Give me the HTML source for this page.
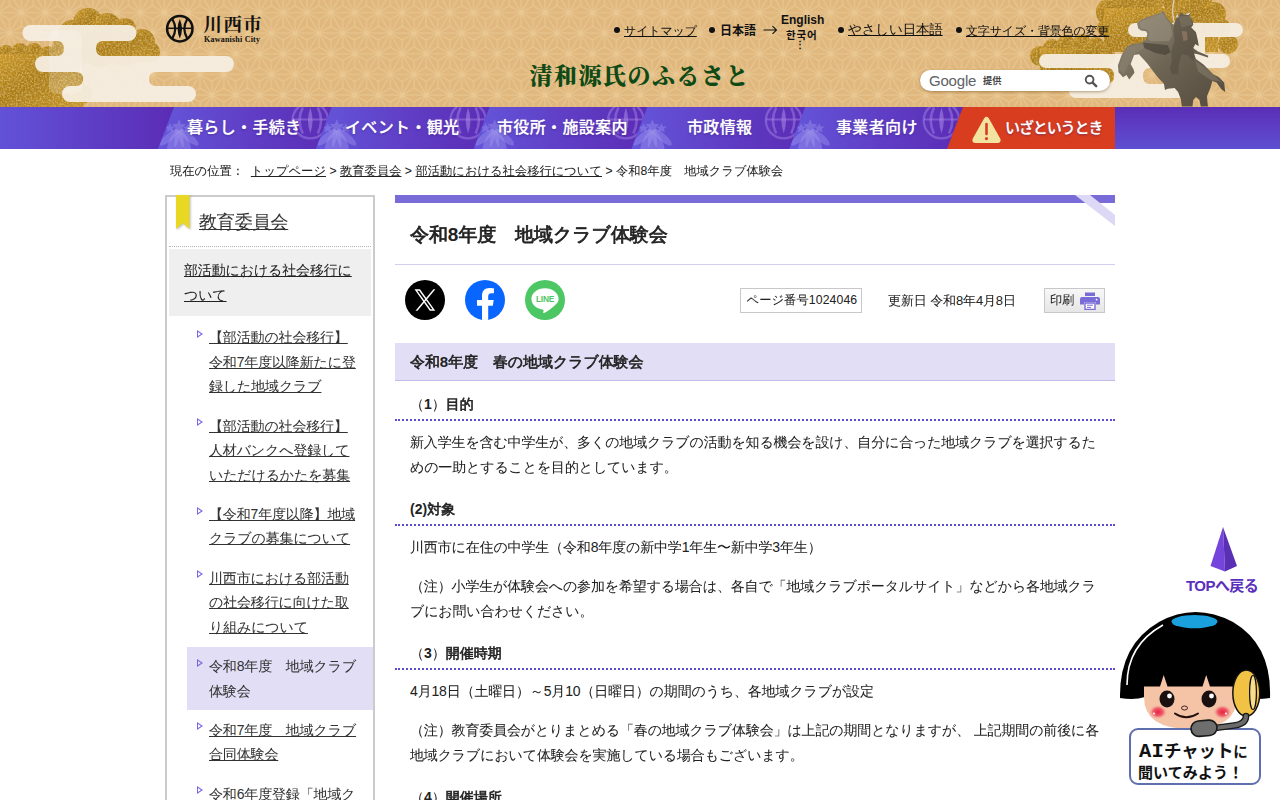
<!DOCTYPE html>
<html lang="ja">
<head>
<meta charset="utf-8">
<title>令和8年度　地域クラブ体験会｜川西市</title>
<style>
*{box-sizing:border-box}
html,body{margin:0;padding:0}
body{width:1280px;height:800px;overflow:hidden;background:#fff;color:#222;
 font-family:"Liberation Sans","WenQuanYi Zen Hei",sans-serif;font-size:14px;line-height:25px;position:relative;letter-spacing:-0.155px;-webkit-text-stroke-width:0.04px}
a{color:#222;text-decoration:underline}
b,strong,.b{font-family:"Liberation Sans","Noto Sans CJK JP",sans-serif;font-weight:bold;letter-spacing:0;-webkit-text-stroke-width:0}
h1,h2,h3{font-family:"Liberation Sans","WenQuanYi Zen Hei",sans-serif;font-weight:normal;-webkit-text-stroke-width:.6px}
h1{-webkit-text-stroke-width:.78px}
h1 b,h2 b,h3 b{font-family:"Liberation Sans",sans-serif}
h3 i{font-style:normal;-webkit-text-stroke-width:.04px}
.abs{position:absolute}
/* header */
#hd{position:absolute;left:0;top:0;width:1280px;height:107px;background:#e0b87e;overflow:hidden}
#hdart{position:absolute;left:0;top:0}
#logo-t{position:absolute;left:203.5px;top:12px;font-family:"Liberation Serif","Noto Serif CJK JP",serif;font-weight:700;font-size:18.5px;line-height:26px;letter-spacing:1.4px;color:#111;white-space:nowrap}
#logo-e{position:absolute;left:204px;top:34.5px;font-family:"Liberation Serif",serif;font-weight:bold;font-size:8px;line-height:10px;letter-spacing:0.22px;color:#111;white-space:nowrap}
.tl{position:absolute;font-size:12px;line-height:14px;white-space:nowrap;color:#111}
.tl a{color:#111}
.dot{position:absolute;width:6px;height:6px;border-radius:50%;background:#111;top:27px}
#catch{position:absolute;left:529.5px;top:59px;font-family:"Liberation Serif","Noto Serif CJK JP",serif;font-weight:900;font-size:23px;line-height:36px;letter-spacing:1.5px;color:#0f4a16;white-space:nowrap}
#search{position:absolute;left:920px;top:70px;width:190px;height:21px;border-radius:11px;background:#fff;box-shadow:0 1px 3px rgba(90,60,10,.45)}
#search .g{position:absolute;left:9px;top:1px;font-size:15px;line-height:19px;color:#5f6368;letter-spacing:-0.2px}
#search .t{position:absolute;left:63px;top:4px;font-size:9.2px;line-height:14px;color:#444}
/* nav */
#nav{position:absolute;left:0;top:107px;width:1280px;height:42px;background:linear-gradient(180deg,#5a2eb6 0%,#5f4fd2 100%);overflow:hidden}
#navart{position:absolute;left:0;top:0}
.nv{position:absolute;top:0;height:42px;line-height:41px;font-size:16px;color:#fff;white-space:nowrap;font-family:"Liberation Sans","Noto Sans CJK JP",sans-serif;font-weight:500;letter-spacing:.35px;text-shadow:0 0 1px rgba(255,255,255,.6),0 1px 2px rgba(40,10,110,.5)}
/* breadcrumb */
#bc{position:absolute;left:170px;top:161px;font-size:12.25px;line-height:20px;white-space:nowrap;color:#222;letter-spacing:.03px}
/* sidebar */
#side{position:absolute;left:165px;top:195px;width:210px;height:620px;border:2px solid #cbcbcb;background:#fff}
#side .ttl{position:absolute;left:32px;top:10.5px;font-size:18px;line-height:28px;white-space:nowrap}
#side .ttl a{color:#333}
#side .sep{position:absolute;left:2px;right:2px;top:49px;border-top:1px dotted #b5b5b5;height:0}
#side .cat{position:absolute;left:2px;top:52px;width:202px;height:67px;background:#efefef;padding:9px 15px 0 15px;line-height:24.5px}
#side ul{position:absolute;left:20px;top:121px;width:186px;margin:0;padding:0;list-style:none;line-height:24.5px}
#side li{position:relative;padding:7.4px 12px 7.4px 22px;color:#333}
#side li a{color:#333}
#side li.cur{background:#e2def5}
#side li:before{content:"";position:absolute;left:10px;top:12px;width:0;height:0;border-left:6px solid #7868dc;border-top:4px solid transparent;border-bottom:4px solid transparent}
#side li:after{content:"";position:absolute;left:11px;top:14px;width:0;height:0;border-left:3px solid #fff;border-top:2px solid transparent;border-bottom:2px solid transparent}
#side li.cur:after{border-left-color:#e2def5}
/* main */
#main{position:absolute;left:395px;top:195px;width:720px}
#bar{position:absolute;left:0;top:0;width:720px;height:8px;background:#7a6cd8}
h1{position:absolute;left:15px;top:20px;margin:0;font-size:19px;line-height:40px;color:#222;white-space:nowrap;letter-spacing:-.1px}
#hl{position:absolute;left:0;top:69px;width:720px;border-top:1px solid #d4cdf2}
.box{position:absolute;font-size:12.25px;line-height:23px;white-space:nowrap;color:#222}
h2{position:absolute;left:0;top:148px;width:720px;height:38px;margin:0;padding:0 15px;font-size:15px;line-height:37px;background:#e2def5;border-bottom:1px solid #c3bbee;color:#222;letter-spacing:-.09px}
#body{position:absolute;left:0;top:186px;width:720px}
h3{margin:0;padding:0 15px 4px;font-size:14px;line-height:21px;border-bottom:2px dotted #5c4cce;color:#222;letter-spacing:0}
#body p{margin:0;padding:0 15px;line-height:25px;color:#222}
/* floating */
#top{position:absolute;left:1186px;top:575px;font-size:15px;line-height:22px;color:#5a30bd;white-space:nowrap;letter-spacing:-0.55px}
#bub{position:absolute;left:1129px;top:728px;width:132px;height:57px;border:2px solid #5f6fae;border-radius:9px;background:#fff}
#bub div{position:absolute;left:8px;font-family:"Liberation Sans","Noto Sans CJK JP",sans-serif;font-weight:700;color:#111;white-space:nowrap}
</style>
</head>
<body>
<div id="hd">
<svg id="hdart" width="1280" height="107" viewBox="0 0 1280 107"><defs><pattern id="asa" width="23.8" height="41.2228" patternUnits="userSpaceOnUse" patternTransform="translate(9.5 -8)"><path d="M-23.8 0L-35.7 20.61M-23.8 0L-11.9 20.61M-23.8 0L0 0M-23.8 13.74L-35.7 20.61M-23.8 13.74L-23.8 0M-23.8 13.74L-11.9 20.61M-23.8 41.22L-35.7 61.83M-23.8 41.22L-11.9 61.83M-23.8 41.22L0 41.22M-23.8 54.96L-35.7 61.83M-23.8 54.96L-23.8 41.22M-23.8 54.96L-11.9 61.83M-11.9 -20.61L-23.8 0M-11.9 -20.61L0 0M-11.9 -20.61L11.9 -20.61M-11.9 -6.87L-23.8 0M-11.9 -6.87L-11.9 -20.61M-11.9 -6.87L0 0M-11.9 6.87L-23.8 0M-11.9 6.87L-11.9 20.61M-11.9 6.87L0 0M-11.9 20.61L-23.8 41.22M-11.9 20.61L0 41.22M-11.9 20.61L11.9 20.61M-11.9 34.35L-23.8 41.22M-11.9 34.35L-11.9 20.61M-11.9 34.35L0 41.22M-11.9 48.09L-23.8 41.22M-11.9 48.09L-11.9 61.83M-11.9 48.09L0 41.22M-11.9 61.83L-23.8 82.45M-11.9 61.83L0 82.45M-11.9 61.83L11.9 61.83M-11.9 75.58L-23.8 82.45M-11.9 75.58L-11.9 61.83M-11.9 75.58L0 82.45M0 -13.74L-11.9 -20.61M0 -13.74L0 0M0 -13.74L11.9 -20.61M0 0L-11.9 20.61M0 0L11.9 20.61M0 0L23.8 0M0 13.74L-11.9 20.61M0 13.74L0 0M0 13.74L11.9 20.61M0 27.48L-11.9 20.61M0 27.48L0 41.22M0 27.48L11.9 20.61M0 41.22L-11.9 61.83M0 41.22L11.9 61.83M0 41.22L23.8 41.22M0 54.96L-11.9 61.83M0 54.96L0 41.22M0 54.96L11.9 61.83M0 68.7L-11.9 61.83M0 68.7L0 82.45M0 68.7L11.9 61.83M11.9 -20.61L0 0M11.9 -20.61L23.8 0M11.9 -20.61L35.7 -20.61M11.9 -6.87L0 0M11.9 -6.87L11.9 -20.61M11.9 -6.87L23.8 0M11.9 6.87L0 0M11.9 6.87L11.9 20.61M11.9 6.87L23.8 0M11.9 20.61L0 41.22M11.9 20.61L23.8 41.22M11.9 20.61L35.7 20.61M11.9 34.35L0 41.22M11.9 34.35L11.9 20.61M11.9 34.35L23.8 41.22M11.9 48.09L0 41.22M11.9 48.09L11.9 61.83M11.9 48.09L23.8 41.22M11.9 61.83L0 82.45M11.9 61.83L23.8 82.45M11.9 61.83L35.7 61.83M11.9 75.58L0 82.45M11.9 75.58L11.9 61.83M11.9 75.58L23.8 82.45M23.8 -13.74L11.9 -20.61M23.8 -13.74L23.8 0M23.8 -13.74L35.7 -20.61M23.8 0L11.9 20.61M23.8 0L35.7 20.61M23.8 0L47.6 0M23.8 13.74L11.9 20.61M23.8 13.74L23.8 0M23.8 13.74L35.7 20.61M23.8 27.48L11.9 20.61M23.8 27.48L23.8 41.22M23.8 27.48L35.7 20.61M23.8 41.22L11.9 61.83M23.8 41.22L35.7 61.83M23.8 41.22L47.6 41.22M23.8 54.96L11.9 61.83M23.8 54.96L23.8 41.22M23.8 54.96L35.7 61.83M23.8 68.7L11.9 61.83M23.8 68.7L23.8 82.45M23.8 68.7L35.7 61.83M35.7 -20.61L23.8 0M35.7 -20.61L47.6 0M35.7 -20.61L59.5 -20.61M35.7 -6.87L23.8 0M35.7 -6.87L35.7 -20.61M35.7 -6.87L47.6 0M35.7 6.87L23.8 0M35.7 6.87L35.7 20.61M35.7 6.87L47.6 0M35.7 20.61L23.8 41.22M35.7 20.61L47.6 41.22M35.7 20.61L59.5 20.61M35.7 34.35L23.8 41.22M35.7 34.35L35.7 20.61M35.7 34.35L47.6 41.22M35.7 48.09L23.8 41.22M35.7 48.09L35.7 61.83M35.7 48.09L47.6 41.22M35.7 61.83L23.8 82.45M35.7 61.83L47.6 82.45M35.7 61.83L59.5 61.83M35.7 75.58L23.8 82.45M35.7 75.58L35.7 61.83M35.7 75.58L47.6 82.45M47.6 -13.74L35.7 -20.61M47.6 -13.74L47.6 0M47.6 -13.74L59.5 -20.61M47.6 0L35.7 20.61M47.6 0L59.5 20.61M47.6 0L71.4 0M47.6 13.74L35.7 20.61M47.6 13.74L47.6 0M47.6 13.74L59.5 20.61M47.6 27.48L35.7 20.61M47.6 27.48L47.6 41.22M47.6 27.48L59.5 20.61M47.6 41.22L35.7 61.83M47.6 41.22L59.5 61.83M47.6 41.22L71.4 41.22M47.6 54.96L35.7 61.83M47.6 54.96L47.6 41.22M47.6 54.96L59.5 61.83M47.6 68.7L35.7 61.83M47.6 68.7L47.6 82.45M47.6 68.7L59.5 61.83M59.5 -20.61L47.6 0M59.5 -20.61L71.4 0M59.5 -20.61L83.3 -20.61M59.5 -6.87L47.6 0M59.5 -6.87L59.5 -20.61M59.5 -6.87L71.4 0M59.5 6.87L47.6 0M59.5 6.87L59.5 20.61M59.5 6.87L71.4 0M59.5 20.61L47.6 41.22M59.5 20.61L71.4 41.22M59.5 20.61L83.3 20.61M59.5 34.35L47.6 41.22M59.5 34.35L59.5 20.61M59.5 34.35L71.4 41.22M59.5 48.09L47.6 41.22M59.5 48.09L59.5 61.83M59.5 48.09L71.4 41.22M59.5 61.83L47.6 82.45M59.5 61.83L71.4 82.45M59.5 61.83L83.3 61.83M59.5 75.58L47.6 82.45M59.5 75.58L59.5 61.83M59.5 75.58L71.4 82.45M71.4 -13.74L59.5 -20.61M71.4 -13.74L71.4 0M71.4 -13.74L83.3 -20.61M71.4 27.48L59.5 20.61M71.4 27.48L71.4 41.22M71.4 27.48L83.3 20.61M71.4 68.7L59.5 61.83M71.4 68.7L71.4 82.45M71.4 68.7L83.3 61.83" stroke="#f3d9aa" stroke-opacity=".46" stroke-width="1" fill="none"/></pattern><linearGradient id="gold" x1="0" y1="0" x2="1" y2="1"><stop offset="0" stop-color="#c99628"/><stop offset=".45" stop-color="#aa7c18"/><stop offset="1" stop-color="#c49228"/></linearGradient><filter id="gn" x="0" y="0" width="100%" height="100%"><feTurbulence type="fractalNoise" baseFrequency=".55" numOctaves="2" seed="3" result="n"/><feColorMatrix in="n" type="matrix" values="0 0 0 0 .98  0 0 0 0 .78  0 0 0 0 .25  .9 0 0 0 -.36" result="m"/><feComposite in="m" in2="SourceGraphic" operator="in" result="t"/><feMerge><feMergeNode in="SourceGraphic"/><feMergeNode in="t"/></feMerge></filter></defs><rect width="1280" height="107" fill="url(#asa)"/><g filter="url(#gn)"><circle cx="88" cy="23" r="15" fill="url(#gold)"/><circle cx="107" cy="27" r="14" fill="url(#gold)"/><circle cx="125" cy="29" r="11" fill="url(#gold)"/><circle cx="72" cy="33" r="13" fill="url(#gold)"/><circle cx="142" cy="42" r="13" fill="url(#gold)"/><circle cx="150" cy="52" r="10" fill="url(#gold)"/><circle cx="62" cy="46" r="10" fill="url(#gold)"/><circle cx="100" cy="45" r="22" fill="url(#gold)"/><circle cx="125" cy="48" r="18" fill="url(#gold)"/><circle cx="78" cy="50" r="16" fill="url(#gold)"/><rect x="62" y="40" width="90" height="22" fill="url(#gold)"/><circle cx="6" cy="54" r="9" fill="url(#gold)"/><circle cx="20" cy="52" r="9" fill="url(#gold)"/><circle cx="34" cy="52" r="9" fill="url(#gold)"/><circle cx="48" cy="55" r="9" fill="url(#gold)"/><circle cx="60" cy="60" r="9" fill="url(#gold)"/><circle cx="70" cy="68" r="10" fill="url(#gold)"/><circle cx="76" cy="80" r="9" fill="url(#gold)"/><circle cx="82" cy="94" r="10" fill="url(#gold)"/><circle cx="74" cy="104" r="10" fill="url(#gold)"/><path d="M0 54H60L74 70L84 94V107H0Z" fill="url(#gold)"/><circle cx="1110" cy="12" r="14" fill="url(#gold)"/><circle cx="1128" cy="4" r="14" fill="url(#gold)"/><circle cx="1150" cy="0" r="14" fill="url(#gold)"/><circle cx="1175" cy="-2" r="14" fill="url(#gold)"/><circle cx="1198" cy="2" r="14" fill="url(#gold)"/><circle cx="1214" cy="14" r="12" fill="url(#gold)"/><circle cx="1222" cy="28" r="9" fill="url(#gold)"/><circle cx="1228" cy="44" r="10" fill="url(#gold)"/><circle cx="1106" cy="28" r="9" fill="url(#gold)"/><path d="M1104 8H1218V52H1104Z" fill="url(#gold)"/><circle cx="1040" cy="56" r="10" fill="url(#gold)"/><circle cx="1052" cy="48" r="9" fill="url(#gold)"/><circle cx="1066" cy="44" r="9" fill="url(#gold)"/><circle cx="1082" cy="43" r="9" fill="url(#gold)"/><circle cx="1096" cy="46" r="9" fill="url(#gold)"/><circle cx="1106" cy="56" r="9" fill="url(#gold)"/><circle cx="1108" cy="74" r="8" fill="url(#gold)"/><path d="M1040 48H1108V82H1040Z" fill="url(#gold)"/></g><g fill="#f6efe3" fill-opacity=".93"><rect x="22.5" y="25" width="114" height="16" rx="8"/><rect x="35" y="56" width="199" height="16" rx="8"/><rect x="62" y="86" width="134" height="16" rx="8"/><path d="M57 41H103Q96 41 96 48.5Q96 56 103 56H57Q64 56 64 48.5Q64 41 57 41Z"/><path d="M76 72H156Q149 72 149 79Q149 86 156 86H76Q83 86 83 79Q83 72 76 72Z"/><rect x="1128" y="23" width="115" height="14" rx="7"/><rect x="1039" y="54" width="191" height="14" rx="7"/><rect x="1069" y="84" width="117" height="14" rx="7"/><path d="M1107 68H1150Q1143 68 1143 76Q1143 84 1150 84H1107Q1114 84 1114 76Q1114 68 1107 68Z"/><rect x="1165" y="37" width="40" height="17"/></g><rect x="49" y="30" width="33" height="64" rx="8" fill="#fff" fill-opacity=".2"/><linearGradient id="brz" x1="0" y1="0" x2="1" y2="1"><stop offset="0" stop-color="#968c7a"/><stop offset=".5" stop-color="#6e6454"/><stop offset="1" stop-color="#524a3d"/></linearGradient><g transform="translate(1110 0) scale(.1375)"><path d="M466 0Q448 70 462 140Q478 215 525 290" stroke="#ded8c8" stroke-width="9" fill="none"/><path d="M197 170L215 150L260 130L330 105L375 90L388 78L398 95L410 125L440 160L462 180L468 170L480 140L495 120L510 100L520 92L540 110L565 98L588 92L575 120L600 150L605 180L590 200L625 235L640 300L645 335L620 320L605 350L640 375L715 405L712 418L640 395L610 390L625 430L680 470L720 510L750 540L790 560L830 600L838 670L810 650L775 600L745 590L730 640L705 700L712 775L660 775L650 725L625 705L605 730L600 775L522 775L515 720L495 670L470 640L420 645L400 655L392 610L350 565L300 500L270 460L210 395L175 400L150 465L172 505L178 530L140 578L120 545L95 562L62 525L58 475L85 400L122 340L160 320L225 312L262 285L272 245L262 228L225 222L205 205Z" fill="url(#brz)"/><path d="M468 175L480 140L510 100L520 92L540 110L588 92L575 120L600 150L605 180L590 200L625 235L645 335L620 320L605 350L620 420L600 440L560 400L520 395L500 470L495 540L450 540L435 500L450 440L445 380L455 340L470 300L462 230Z" fill="#4e463a" fill-opacity=".45"/><path d="M215 160L330 112L385 95L405 135L440 175L455 250L430 300L300 300L275 285L285 240L268 215L220 205Z" fill="#9a917f" fill-opacity=".55"/><path d="M240 310L420 330L440 380L400 400L330 385L250 350Z" fill="#3d372d" fill-opacity=".55"/><path d="M130 340L230 320L250 350L200 380L170 395L140 460L100 540L70 510L75 460L100 400Z" fill="#8d8472" fill-opacity=".5"/><path d="M620 440L700 500L760 550L825 610L790 590L740 585L700 560L640 520Z" fill="#8d8472" fill-opacity=".45"/><path d="M500 120L585 115L598 180L520 200Z" fill="#7d7464" fill-opacity=".6"/><path d="M545 105L588 90L572 110Z" fill="#e8e2d2"/><path d="M478 128L490 100L500 125Z" fill="#d8d2c2"/><path d="M520 225L560 230L565 290L535 300Z" fill="#a08068" fill-opacity=".6"/></g><g transform="translate(179.8 28.7)"><circle r="12.7" fill="none" stroke="#111" stroke-width="2.5"/><path d="M-12.6 -.4H12.6" stroke="#111" stroke-width="1.5"/><path d="M0 -9.8Q4.4 0 0 9.8Q-4.4 0 0 -9.8Z" fill="#111"/><path d="M-7.6 -10Q-1.6 0 -7.6 10" fill="none" stroke="#111" stroke-width="2.2"/><path d="M7.6 -10Q1.6 0 7.6 10" fill="none" stroke="#111" stroke-width="2.2"/></g></svg>
<div id="logo-t">川西市</div>
<div id="logo-e">Kawanishi City</div>
<span class="dot" style="left:614px"></span><div class="tl" style="left:624px;top:24px"><a>サイトマップ</a></div>
<span class="dot" style="left:709px"></span><div class="tl b" style="left:720px;top:24px">日本語</div>
<svg class="abs" style="left:763px;top:24px" width="15" height="12" viewBox="0 0 15 12"><path d="M0.5 6H13.5M9.5 2.2L13.5 6L9.5 9.8" fill="none" stroke="#111" stroke-width="1.1"/></svg>
<div class="tl b" style="left:781px;top:13px;font-size:12px">English</div>
<div class="tl" style="left:786px;top:28px;font-size:10.5px;letter-spacing:.9px;font-family:'Liberation Sans','Noto Sans CJK KR',sans-serif;font-weight:bold">한국어</div>
<div class="tl b" style="left:795px;top:40px;font-size:10px;line-height:10px">⋮</div>
<span class="dot" style="left:838px"></span><div class="tl" style="left:848px;top:23px;font-size:13.5px"><a>やさしい日本語</a></div>
<span class="dot" style="left:956px"></span><div class="tl" style="left:966px;top:24px"><a>文字サイズ・背景色の変更</a></div>
<div id="catch">清和源氏のふるさと</div>
<div id="search"><span class="g">Google</span><span class="t b">提供</span>
<svg class="abs" style="left:164px;top:4px" width="14" height="14" viewBox="0 0 14 14"><circle cx="5.6" cy="5.6" r="3.9" fill="none" stroke="#555" stroke-width="1.9"/><path d="M8.6 8.6L12.2 12.2" stroke="#555" stroke-width="2.4" stroke-linecap="round"/></svg>
</div>
</div>

<div id="nav">
<svg id="navart" width="1280" height="42" viewBox="0 0 1280 42"><defs><linearGradient id="ng" x1="0" y1="0" x2="1" y2="0"><stop offset="0" stop-color="#6456da"/><stop offset=".55" stop-color="#5f3dc4"/><stop offset="1" stop-color="#5b2cb5"/></linearGradient><linearGradient id="nl" x1="0" y1="0" x2="1" y2="0"><stop offset="0" stop-color="#6252d8"/><stop offset="1" stop-color="#5b2cb5"/></linearGradient><g id="crest" fill="none" stroke="#a98be6" stroke-opacity=".45"><circle r="17.8" stroke-width="2.3"/><path d="M-17.8 -1H17.8" stroke-width="1.8"/><path d="M0 -13Q4.6 0 0 13Q-4.6 0 0 -13Z" fill="#a98be6" fill-opacity=".55" stroke="none"/><path d="M-7.5 -13Q-14 0 -7.5 13" stroke-width="2.6"/><path d="M7.5 -13Q14 0 7.5 13" stroke-width="2.6"/></g><g id="sasa" fill="#a9a0f0" fill-opacity=".36"><ellipse cx="0" cy="14" rx="4.6" ry="13"/><ellipse cx="0" cy="14" rx="4.2" ry="13" transform="rotate(24)"/><ellipse cx="0" cy="14" rx="4.2" ry="13" transform="rotate(-24)"/><ellipse cx="0" cy="13" rx="3.8" ry="12" transform="rotate(50)"/><ellipse cx="0" cy="13" rx="3.8" ry="12" transform="rotate(-50)"/><path d="M0 -10L2 -5L7 -5L3.5 -1.5L5 3L0 0.5L-5 3L-3.5 -1.5L-7 -5L-2 -5Z"/><path d="M9 -6L10.5 -2.5L14.5 -2.5L11.5 0L12.5 3.5L9 1.5L5.5 3.5L6.5 0L3.5 -2.5L7.5 -2.5Z"/><path d="M-9 -6L-7.5 -2.5L-3.5 -2.5L-6.5 0L-5.5 3.5L-9 1.5L-12.5 3.5L-11.5 0L-14.5 -2.5L-10.5 -2.5Z"/></g></defs><path d="M0 0H174 L158 42H0Z" fill="url(#nl)"/><g transform="translate(158 0)"><path d="M16 0H174.3 L158.3 42H0Z" fill="url(#ng)"/><clipPath id="c0"><path d="M16 0H173.8 L157.8 42H0Z"/></clipPath><g clip-path="url(#c0)"><use href="#crest" x="152.3" y="13.5"/><use href="#sasa" x="21" y="22"/></g></g><g transform="translate(315.8 0)"><path d="M16 0H174.3 L158.3 42H0Z" fill="url(#ng)"/><clipPath id="c1"><path d="M16 0H173.8 L157.8 42H0Z"/></clipPath><g clip-path="url(#c1)"><use href="#crest" x="152.3" y="13.5"/><use href="#sasa" x="21" y="22"/></g></g><g transform="translate(473.6 0)"><path d="M16 0H174.3 L158.3 42H0Z" fill="url(#ng)"/><clipPath id="c2"><path d="M16 0H173.8 L157.8 42H0Z"/></clipPath><g clip-path="url(#c2)"><use href="#crest" x="152.3" y="13.5"/><use href="#sasa" x="21" y="22"/></g></g><g transform="translate(631.4 0)"><path d="M16 0H174.3 L158.3 42H0Z" fill="url(#ng)"/><clipPath id="c3"><path d="M16 0H173.8 L157.8 42H0Z"/></clipPath><g clip-path="url(#c3)"><use href="#crest" x="152.3" y="13.5"/><use href="#sasa" x="21" y="22"/></g></g><g transform="translate(789.2 0)"><path d="M16 0H174.3 L158.3 42H0Z" fill="url(#ng)"/><clipPath id="c4"><path d="M16 0H173.8 L157.8 42H0Z"/></clipPath><g clip-path="url(#c4)"><use href="#crest" x="152.3" y="13.5"/><use href="#sasa" x="21" y="22"/></g></g><path d="M963 0H1115V42H947Z" fill="#d83d1f"/><path d="M987.5 12L999 32.5Q999.6 34.5 997.5 34.5H975.5Q973.4 34.5 974 32.5L985.5 12Q986.5 10.6 987.5 12Z" fill="#f3e3a0" stroke="#f3e3a0" stroke-width="3" stroke-linejoin="round"/><path d="M986.5 17V27" stroke="#d83d1f" stroke-width="2.6" stroke-linecap="round"/><circle cx="986.5" cy="31.6" r="1.6" fill="#d83d1f"/></svg>
<div class="nv" style="left:187px">暮らし・手続き</div>
<div class="nv" style="left:345px">イベント・観光</div>
<div class="nv" style="left:497px">市役所・施設案内</div>
<div class="nv" style="left:687px">市政情報</div>
<div class="nv" style="left:836px">事業者向け</div>
<div class="nv" style="left:1005px;font-size:15px;letter-spacing:-1.1px">いざというとき</div>
</div>

<div id="bc">現在の位置：&nbsp; <a>トップページ</a> &gt; <a>教育委員会</a> &gt; <a>部活動における社会移行について</a> &gt; 令和8年度　地域クラブ体験会</div>

<div id="side">
<svg class="abs" style="left:9px;top:-2px;filter:drop-shadow(1px 1px 1px rgba(0,0,0,.28))" width="16" height="38" viewBox="0 0 16 38"><path d="M0 0H13.5V34L6.75 28L0 34Z" fill="#e8d823"/></svg>
<div class="ttl"><a>教育委員会</a></div>
<div class="sep"></div>
<div class="cat"><a>部活動における社会移行について</a></div>
<ul>
<li><a>【部活動の社会移行】令和7年度以降新たに登録した地域クラブ</a></li>
<li><a>【部活動の社会移行】人材バンクへ登録していただけるかたを募集</a></li>
<li><a>【令和7年度以降】地域クラブの募集について</a></li>
<li><a>川西市における部活動の社会移行に向けた取り組みについて</a></li>
<li class="cur">令和8年度　地域クラブ体験会</li>
<li><a>令和7年度　地域クラブ合同体験会</a></li>
<li><a>令和6年度登録「地域クラブ」について</a></li>
</ul>
</div>

<div id="main">
<div id="bar"></div>
<svg class="abs" style="left:675px;top:0" width="45" height="36" viewBox="0 0 45 36"><path d="M5 0H20L45 20V31Z" fill="#ddd8f5"/></svg>
<h1>令和<b>8</b>年度　地域クラブ体験会</h1>
<div id="hl"></div>
<svg class="abs" style="left:10px;top:85px" width="160" height="40" viewBox="0 0 160 40"><circle cx="20" cy="20" r="20" fill="#000"/><g transform="translate(20 20) scale(1.14) translate(-20.2 -20)"><path d="M11 10.5H15.8L29.2 29.5H24.4ZM13.4 11.8L25.1 28.2H26.8L15.1 11.8Z" fill="#fff" fill-rule="evenodd"/><path d="M27.6 10.5L11.9 29.5H13.6L29.3 10.5Z" fill="#fff"/></g><circle cx="80" cy="20" r="20" fill="#0866ff"/><path d="M87.8 25.8L88.7 20H83.2V16.3C83.2 14.7 84 13.2 86.4 13.2H88.9V8.3C88.9 8.3 86.7 7.9 84.5 7.9C80 7.9 77 10.6 77 15.6V20H72V25.8H77V39.8A20 20 0 0 0 83.2 39.8V25.8Z" fill="#fff"/><circle cx="140" cy="20" r="20" fill="#4cc764"/><path d="M140 8.2C132.4 8.2 126.4 13 126.4 18.9C126.4 24.2 131.2 28.6 137.6 29.4C138.7 29.6 138.6 30.2 138.4 31.6C138.3 32.4 137.9 33.6 139.3 33C140.8 32.4 147.2 28.4 150.1 25.1C152.1 23 153.6 21.2 153.6 18.9C153.6 13 147.6 8.2 140 8.2Z" fill="#fff"/><text x="140" y="22" font-family="Liberation Sans,sans-serif" font-weight="bold" font-size="8.4" fill="#4cc764" text-anchor="middle" letter-spacing="-.3">LINE</text></svg>
<div class="box" style="left:345px;top:93px;width:122px;height:25px;border:1px solid #c8c8c8;background:#fff;padding-left:5.5px;letter-spacing:.1px">ページ番号1024046</div>
<div class="box" style="left:493px;top:94px;font-size:13px;letter-spacing:-.12px">更新日 令和8年4月8日</div>
<div class="box" style="left:649px;top:93px;width:61px;height:25px;border:1px solid #c8c8c8;background:linear-gradient(#f7f7f7,#e6e6e6);padding-left:5px">印刷<svg class="abs" style="left:35px;top:3px" width="20" height="18" viewBox="0 0 20 18"><path d="M5 0.5H15V4H5Z" fill="#7a6cd8"/><path d="M2 5H18Q20 5 20 7V12.5H16V10H4V12.5H0V7Q0 5 2 5Z" fill="#7a6cd8"/><path d="M5 11H15V17.5H5Z" fill="#fff" stroke="#7a6cd8" stroke-width="1.4"/><path d="M7 13.2H13M7 15.4H11" stroke="#7a6cd8" stroke-width="1"/><circle cx="16.6" cy="7.6" r=".9" fill="#fff"/></svg></div>
<h2>令和<b>8</b>年度　春の地域クラブ体験会</h2>
<div id="body">
<h3 style="margin-top:13px"><i>（</i><b>1</b><i>）</i>目的</h3>
<p style="margin-top:9px">新入学生を含む中学生が、多くの地域クラブの活動を知る機会を設け、自分に合った地域クラブを選択するための一助とすることを目的としています。</p>
<h3 style="margin-top:19px"><b>(2)</b>対象</h3>
<p style="margin-top:9px">川西市に在住の中学生（令和8年度の新中学1年生〜新中学3年生）</p>
<p style="margin-top:14px">（注）小学生が体験会への参加を希望する場合は、各自で「地域クラブポータルサイト」などから各地域クラブにお問い合わせください。</p>
<h3 style="margin-top:19px"><i>（</i><b>3</b><i>）</i>開催時期</h3>
<p style="margin-top:9px">4月18日（土曜日）～5月10（日曜日）の期間のうち、各地域クラブが設定</p>
<p style="margin-top:14px">（注）教育委員会がとりまとめる「春の地域クラブ体験会」は上記の期間となりますが、 上記期間の前後に各地域クラブにおいて体験会を実施している場合もございます。</p>
<h3 style="margin-top:19px"><i>（</i><b>4</b><i>）</i>開催場所</h3>
<p style="margin-top:9px">各地域クラブが定める活動場所</p>
</div>
</div>

<svg class="abs" style="left:1205px;top:524px" width="36" height="52" viewBox="0 0 36 52"><path d="M18 3L5.5 42L20 47.6Z" fill="#7444dc"/><path d="M18 3L32 42L20 47.6Z" fill="#5a2fb3"/></svg>
<div id="top" class="b">TOPへ戻る</div>
<svg id="chara" class="abs" style="left:1115px;top:605px" width="165" height="135" viewBox="0 0 165 135"><defs><radialGradient id="chk"><stop offset="0" stop-color="#e8203c"/><stop offset=".55" stop-color="#ee4a60" stop-opacity=".85"/><stop offset="1" stop-color="#f6a0a0" stop-opacity="0"/></radialGradient></defs><path d="M5 93Q4 40 44 17Q80 -3 118 17Q157 40 155 93Q130 97 120 86L40 86Q28 97 5 93Z" fill="#000"/><path d="M29 68H122V92Q122 124 75.5 124Q29 124 29 92Z" fill="#f5c3a5"/><path d="M20 60H135V81.5H95L91.2 70L87.5 81.5H52.5L48.7 70L45 81.5H20Z" fill="#000"/><ellipse cx="79.5" cy="16.6" rx="23" ry="6.6" fill="#1aa0dc"/><path d="M12 80Q12 40 48 20" stroke="#fff" stroke-width="1.6" fill="none"/><ellipse cx="52" cy="94" rx="7.5" ry="8.5" fill="#1a1010"/><ellipse cx="94" cy="94" rx="7.5" ry="8.5" fill="#1a1010"/><circle cx="54.5" cy="91" r="2.4" fill="#fff"/><circle cx="96.5" cy="91" r="2.4" fill="#fff"/><ellipse cx="43" cy="107" rx="9" ry="7" fill="url(#chk)"/><ellipse cx="107.5" cy="107" rx="9" ry="7" fill="url(#chk)"/><circle cx="39" cy="108.5" r="1" fill="#fff"/><circle cx="111" cy="108.5" r="1" fill="#fff"/><ellipse cx="69.5" cy="103" rx="3" ry="2" fill="none" stroke="#402020" stroke-width="1"/><path d="M60 108.5Q71 116 83 108.5" stroke="#201010" stroke-width="2" fill="none" stroke-linecap="round"/><ellipse cx="131.3" cy="88" rx="13.5" ry="23" fill="#f1c243" stroke="#111" stroke-width="1.5"/><ellipse cx="138" cy="87.5" rx="3.4" ry="17" fill="#f7de8a" stroke="#111" stroke-width="1.2"/></svg>
<div id="bub"><div style="top:8px;left:8px;font-size:17.5px;line-height:26px"><span style="font-family:'Liberation Mono',monospace;font-size:20.5px;letter-spacing:.2px">AI</span>チャット<span style="font-size:14.5px">に</span></div><div style="top:33px;left:7px;font-size:15px;line-height:20px;letter-spacing:.1px">聞いてみよう！</div></div>
<svg id="mic" class="abs" style="left:1115px;top:605px" width="165" height="135" viewBox="0 0 165 135"><path d="M131 111Q131 119 119 120.5L100 123" stroke="#1a1a1a" stroke-width="6.6" fill="none" stroke-linecap="round"/><path d="M131 111Q131 119 119 120.5L100 123" stroke="#6a6a6a" stroke-width="4" fill="none" stroke-linecap="round"/><rect x="76" y="115.5" width="26" height="15.5" rx="7.7" fill="#6e6e6e" stroke="#1a1a1a" stroke-width="1.7" transform="rotate(-5 89 123)"/></svg>
</body>
</html>
